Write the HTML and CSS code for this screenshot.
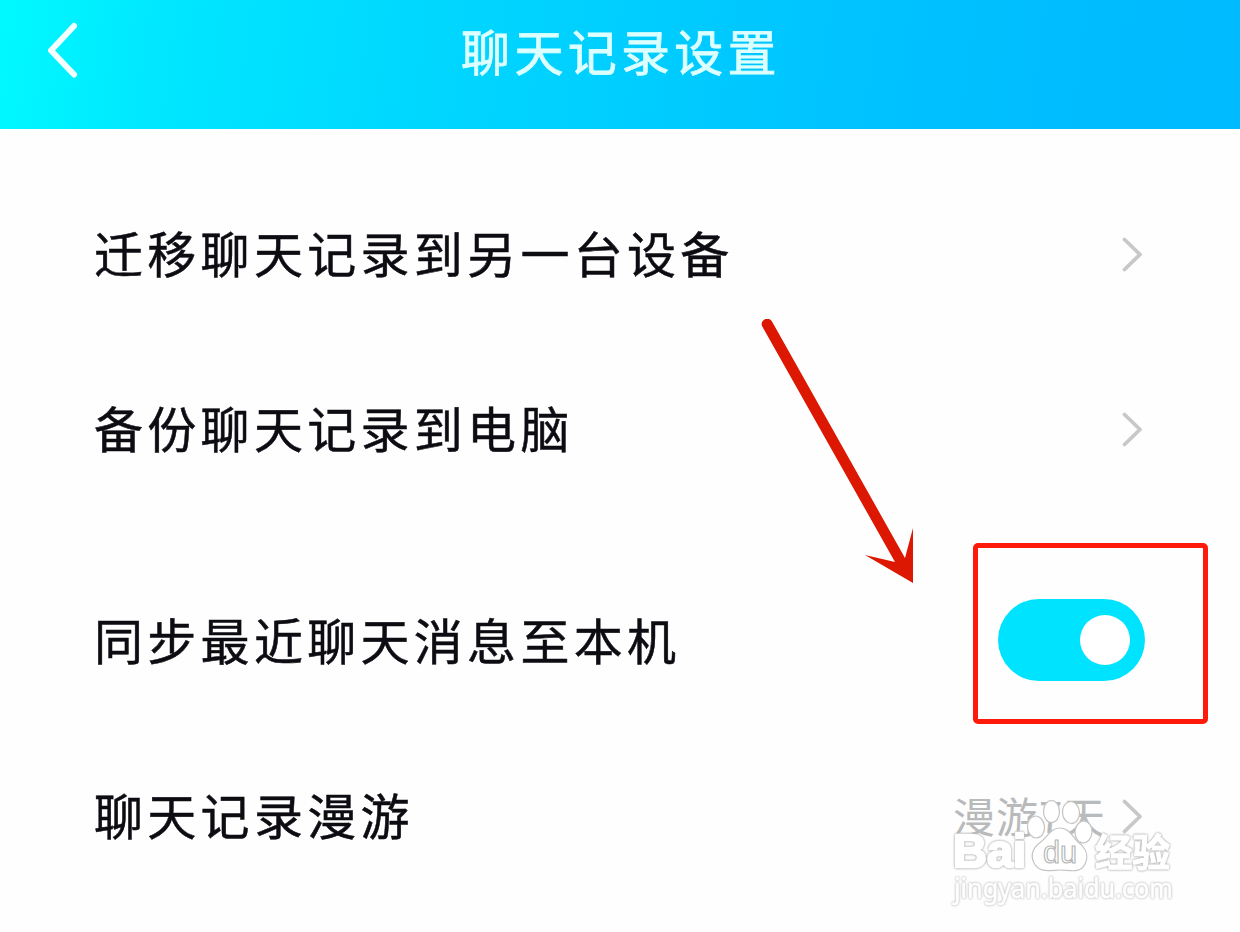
FILE: index.html
```html
<!DOCTYPE html>
<html lang="zh-CN">
<head>
<meta charset="utf-8">
<title>聊天记录设置</title>
<link rel="stylesheet" href="styles.css">
</head>
<body>
<div class="screen">
  <header class="header">
    <svg class="back" viewBox="0 0 36 60"><path d="M29 5 L6 29.500 L29 53.500"/></svg>
    <h1 class="title">聊天记录设置</h1>
  </header>
  <main class="list">
    <div class="row"><span class="label">迁移聊天记录到另一台设备</span><svg class="chevron" viewBox="0 0 24 38"><path d="M4.500 3.500 L20 18.500 L4.500 33.500"/></svg></div>
    <div class="row"><span class="label">备份聊天记录到电脑</span><svg class="chevron" viewBox="0 0 24 38"><path d="M4.500 3.500 L20 18.500 L4.500 33.500"/></svg></div>
    <div class="row row-group"><span class="label">同步最近聊天消息至本机</span><span class="toggle"><span class="knob"></span></span></div>
    <div class="row"><span class="label">聊天记录漫游</span><span class="value">漫游7天</span><svg class="chevron" viewBox="0 0 24 38"><path d="M4.500 3.500 L20 18.500 L4.500 33.500"/></svg></div>
  </main>
  <div class="highlight"></div>
  <svg class="arrow" viewBox="0 0 160 270">
    <path d="M2 7 A5.500 5.500 0 0 1 12 2.500 L145 239 L153 209 L153 264 L105 236 L135 243 Z"/>
  </svg>
  <svg class="watermark" viewBox="0 0 260 136">
    <text class="brand" x="11" y="77" textLength="73" lengthAdjust="spacingAndGlyphs">Bai</text>
    <g class="paw">
      <path d="M118 38 C109 38 106 46 100 51 C90 58 88 65 92 73 C98 84 109 80 118 80 C128 80 138 84 143 74 C147 66 144 58 136 52 C130 46 127 38 118 38 Z"/>
      <ellipse cx="94" cy="37" rx="8.500" ry="11" transform="rotate(-5 94 37)"/>
      <ellipse cx="109.500" cy="21.500" rx="8" ry="11"/>
      <ellipse cx="129" cy="22.500" rx="8.500" ry="11" transform="rotate(-5 129 22.500)"/>
      <ellipse cx="141.500" cy="42" rx="8.500" ry="11" transform="rotate(5 141.500 42)"/>
    </g>
    <text class="du" x="101" y="73" textLength="34" lengthAdjust="spacingAndGlyphs">du</text>
    <text class="exp" x="153" y="75.500" textLength="75" lengthAdjust="spacingAndGlyphs">经验</text>
    <text class="url" x="12" y="108" textLength="219" lengthAdjust="spacingAndGlyphs">jingyan.baidu.com</text>
  </svg>
</div>
</body>
</html>
```
FILE: styles.css
```css
* { box-sizing: border-box; }
body {
  margin: 0;
  background: #fefefe;
  font-family: "Noto Sans CJK SC", "Noto Sans", sans-serif;
}
.screen {
  position: relative;
  width: 1240px;
  height: 932px;
  overflow: hidden;
}
.header {
  display: grid;
  grid-template-columns: 80px 1fr 80px;
  align-items: center;
  height: 129px;
  padding-bottom: 30px;
  background: linear-gradient(98deg, #00faff 0%, #00e8ff 12%, #00daff 30%, #00ceff 50%, #00c3ff 68%, #00bdff 85%, #00bbff 100%);
}
.back {
  width: 36px;
  height: 60px;
  margin: 2px 0 0 45px;
}
.back path {
  fill: none;
  stroke: #f4ffff;
  stroke-width: 6;
  stroke-linecap: round;
  stroke-linejoin: round;
}
.title {
  margin: 0;
  padding-left: 2px;
  text-align: center;
  color: #dcffff;
  font-size: 49px;
  font-weight: 400;
  line-height: 72px;
  letter-spacing: 4.300px;
  -webkit-text-stroke: 0.800px #dcffff;
}
.list {
  display: flex;
  flex-direction: column;
  padding: 38px 96px 0 94px;
}
.row {
  display: flex;
  align-items: center;
  height: 175.500px;
}
.row-group { margin-top: 36px; }
.label {
  flex: 1;
  padding-bottom: 6px;
  color: #0c0c12;
  font-size: 49px;
  line-height: 72px;
  letter-spacing: 4.300px;
  -webkit-text-stroke: 0.500px #0c0c12;
}
.chevron {
  width: 24px;
  height: 38px;
}
.chevron path {
  fill: none;
  stroke: #c8c8ca;
  stroke-width: 3.800;
  stroke-linecap: round;
  stroke-linejoin: round;
}
.value {
  padding-bottom: 5px;
  margin-right: 14px;
  color: #b9babb;
  font-size: 42px;
  font-weight: 400;
  letter-spacing: 0.900px;
}
.toggle {
  display: flex;
  align-items: center;
  justify-content: flex-end;
  width: 147px;
  height: 82px;
  padding-right: 15px;
  margin: 0 -1px 3px 0;
  border-radius: 41px;
  background: #00e3ff;
}
.knob {
  width: 50px;
  height: 50px;
  border-radius: 50%;
  background: #fff;
}
.highlight {
  position: absolute;
  left: 973px;
  top: 543px;
  width: 235px;
  height: 181px;
  border: 5px solid #ff1a0c;
  border-radius: 5px;
}
.arrow {
  position: absolute;
  left: 760px;
  top: 319px;
  width: 160px;
  height: 270px;
}
.arrow path { fill: #dc1802; }
.watermark {
  position: absolute;
  left: 942px;
  top: 790px;
  width: 260px;
  height: 136px;
}
.paw {
  fill: #fff;
  stroke: #c4c4c4;
  stroke-width: 1.200;
}
.brand, .exp, .url {
  fill: #fff;
  stroke: #fff;
  stroke-linejoin: round;
  filter: drop-shadow(0 0 0.800px #a8a8a8) drop-shadow(0 0 0.600px #d4d4d4);
}
.brand {
  font: 700 47px "Liberation Sans", sans-serif;
  stroke-width: 2.500;
}
.du {
  font: 400 31px "Liberation Sans", sans-serif;
  fill: #fff;
  stroke: #b8b8b8;
  stroke-width: 1.200;
}
.exp {
  font: 700 38px "Noto Sans CJK SC", sans-serif;
  stroke-width: 1.200;
}
.url {
  font: 400 27px "Noto Sans", sans-serif;
  stroke-width: 0.600;
  filter: drop-shadow(0 0 0.800px #bcbcbc) drop-shadow(0 0 0.600px #dedede);
}
```
